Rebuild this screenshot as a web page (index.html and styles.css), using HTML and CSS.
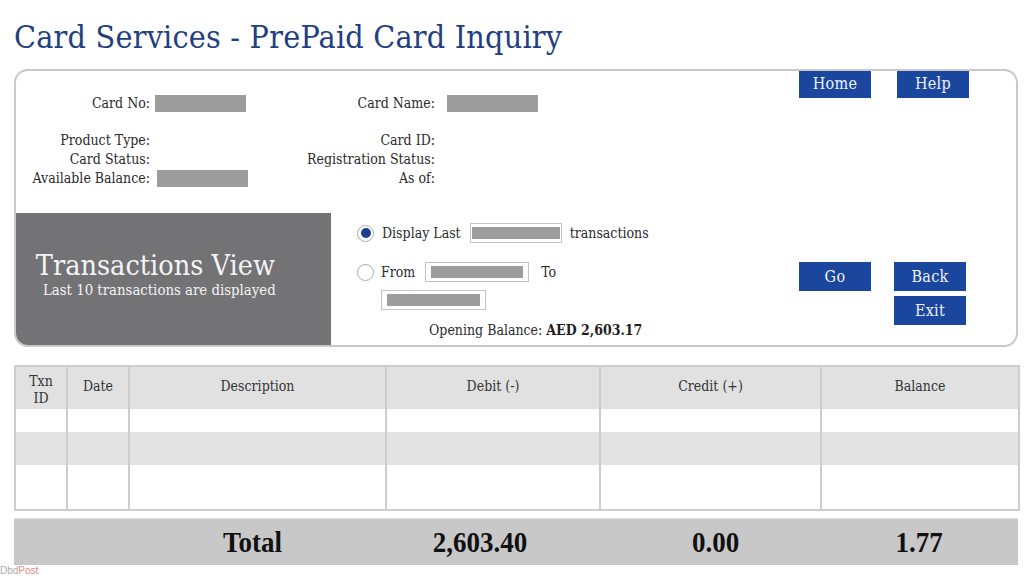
FILE: index.html
```html
<!DOCTYPE html>
<html lang="en">
<head>
<meta charset="utf-8">
<title>Card Services - PrePaid Card Inquiry</title>
<link rel="stylesheet" href="styles.css">
</head>
<body>
<h1 class="title">Card Services - PrePaid Card Inquiry</h1>

<section class="panel">
  <div class="info">
    <div class="fields">
      <span class="lbl">Card No:</span><span class="val"><span class="mask"></span></span>
      <span class="lbl">Card Name:</span><span class="val wide"><span class="mask"></span></span>

      <span class="lbl">Product Type:</span><span class="val"></span>
      <span class="lbl">Card ID:</span><span class="val"></span>

      <span class="lbl">Card Status:</span><span class="val"></span>
      <span class="lbl">Registration Status:</span><span class="val"></span>

      <span class="lbl">Available Balance:</span><span class="val"><span class="mask alt"></span></span>
      <span class="lbl">As of:</span><span class="val"></span>
    </div>
    <nav class="nav">
      <button class="btn">Home</button>
      <button class="btn">Help</button>
    </nav>
  </div>

  <div class="lower">
    <div class="tv">
      <div class="tv-text">
        <div class="tv-title">Transactions View</div>
        <div class="tv-sub">Last 10 transactions are displayed</div>
      </div>
    </div>

    <div class="filter">
      <div class="frow">
        <span class="radio on"></span>
        <span>Display Last</span>
        <span class="field f-last"><span class="fill"></span></span>
        <span>transactions</span>
      </div>
      <div class="frow r2">
        <span class="radio"></span>
        <span>From</span>
        <span class="field f-from"><span class="fill"></span></span>
        <span class="to">To</span>
      </div>
      <div class="frow r3">
        <span class="field f-to"><span class="fill"></span></span>
      </div>
      <div class="opening">Opening Balance: <b>AED 2,603.17</b></div>
    </div>

    <div class="actions">
      <button class="btn">Go</button>
      <button class="btn">Back</button>
      <button class="btn">Exit</button>
    </div>
  </div>
</section>

<table class="txns">
  <colgroup>
    <col class="c1"><col class="c2"><col class="c3"><col class="c4"><col class="c5"><col class="c6">
  </colgroup>
  <thead>
    <tr><th>Txn<br>ID</th><th>Date</th><th>Description</th><th>Debit (-)</th><th>Credit (+)</th><th>Balance</th></tr>
  </thead>
  <tbody>
    <tr class="ra"><td></td><td></td><td></td><td></td><td></td><td></td></tr>
    <tr class="rb"><td></td><td></td><td></td><td></td><td></td><td></td></tr>
    <tr class="rc"><td></td><td></td><td></td><td></td><td></td><td></td></tr>
  </tbody>
</table>

<div class="totals">
  <span></span><span></span>
  <span class="tot">Total</span>
  <span class="tot">2,603.40</span>
  <span class="tot">0.00</span>
  <span class="tot">1.77</span>
</div>

<div class="mark"><span class="m1">Dbd</span><span class="m2">Post</span></div>
</body>
</html>
```

FILE: styles.css
```css
* { box-sizing: border-box; }

html, body {
  margin: 0;
  background: #ffffff;
}

body {
  padding: 16px 6px 0 14px;
  font-family: "DejaVu Serif Condensed", "DejaVu Serif", serif;
  font-stretch: condensed;
  font-size: 14px;
  color: #2b2b2b;
  overflow: hidden;
  height: 576px;
}

.title {
  margin: 0 0 13px 0;
  font-size: 32px;
  line-height: 42px;
  font-weight: normal;
  color: #233f80;
  letter-spacing: 0.2px;
}

/* ---------- card panel ---------- */
.panel {
  height: 278px;
  margin-top: -2px;
  border: 2px solid #c9c9c9;
  border-radius: 14px;
  overflow: hidden;
  display: flex;
  flex-direction: column;
}

.info {
  height: 142px;
  display: flex;
  align-items: flex-start;
  padding-right: 47px;
}

.fields {
  display: grid;
  grid-template-columns: 134px 151px 134px 120px;
  grid-template-rows: 37px 19px 19px 19px;
  margin-top: 23px;
  align-items: start;
  line-height: 19px;
}

.lbl {
  text-align: right;
  white-space: nowrap;
}

.val {
  padding-left: 5px;
  display: flex;
  align-items: center;
  height: 19px;
}

.val.wide { padding-left: 12px; }

.mask {
  display: block;
  width: 91px;
  height: 17px;
  background: #9c9c9c;
}

.mask.alt { margin-left: 2px; }

.nav {
  margin-left: auto;
  margin-top: -2px;
  display: flex;
  gap: 26px;
}

.btn {
  width: 72px;
  height: 29px;
  border: 0;
  padding: 0;
  background: #1b469d;
  color: #eef2fa;
  font-family: inherit;
  font-stretch: condensed;
  font-size: 16px;
  line-height: 29px;
  letter-spacing: 0.3px;
}

/* ---------- lower band ---------- */
.lower {
  flex: 1;
  display: flex;
}

.tv {
  width: 315px;
  background: #737275;
  display: flex;
  align-items: center;
  padding-left: 19px;
  padding-bottom: 10px;
}

.tv-text {
  text-align: center;
  color: #f4f4f4;
}

.tv-title {
  font-size: 28.5px;
  line-height: 31px;
}

.tv-sub {
  font-size: 14.8px;
  line-height: 17px;
  padding-left: 8px;
}

.filter {
  flex: 1;
  padding: 10px 0 0 26px;
  display: flex;
  flex-direction: column;
}

.frow {
  display: flex;
  align-items: center;
  height: 20px;
  gap: 8px;
}

.frow.r2 { margin-top: 19px; gap: 7px; }
.frow.r3 { margin-top: 8px; padding-left: 24px; }

.radio {
  width: 17px;
  height: 17px;
  border-radius: 50%;
  border: 1px solid #a9a9a9;
  background: #fff;
  display: flex;
  align-items: center;
  justify-content: center;
  flex: none;
}

.radio.on::after {
  content: "";
  width: 10px;
  height: 10px;
  border-radius: 50%;
  background: #1d3f8e;
}

.field {
  display: flex;
  padding: 3px 5px;
  border: 1px solid #c4c4c4;
  background: #fff;
  height: 20px;
}

.fill {
  display: block;
  width: 100%;
  background: #9c9c9c;
}

.f-last { width: 92px; margin-left: 1px; padding: 3px 1px; }
.f-from { width: 104px; margin-left: 3px; }
.to { margin-left: 5px; }
.f-to { width: 105px; }

.opening {
  margin-top: 10px;
  padding-left: 72px;
  line-height: 20px;
}

.opening b { color: #1e1e1e; }

.actions {
  display: grid;
  grid-template-columns: 72px 72px;
  grid-template-rows: 29px 29px;
  column-gap: 23px;
  row-gap: 5px;
  padding: 49px 50px 0 0;
}

.actions .btn:nth-child(3) { grid-column: 2; }

/* ---------- transactions table ---------- */
.txns {
  margin-top: 18px;
  width: 1004px;
  border-collapse: collapse;
  table-layout: fixed;
  border: 2px solid #cdcdcd;
}

.c1 { width: 52px; }
.c2 { width: 62px; }
.c3 { width: 257px; }
.c4 { width: 214px; }
.c5 { width: 221px; }
.c6 { width: 198px; }

.txns th, .txns td {
  border-left: 2px solid #cdcdcd;
  border-right: 2px solid #cdcdcd;
  padding: 0;
}

.txns th {
  height: 43px;
  background: #e1e1e1;
  font-weight: normal;
  vertical-align: top;
  padding-top: 11px;
  line-height: 17px;
  color: #333;
}

.txns th:first-child { padding-top: 6px; }

.ra td { height: 23px; background: #fff; }
.rb td { height: 33px; background: #e3e3e3; }
.rc td { height: 45px; background: #fff; }

/* ---------- totals bar ---------- */
.totals {
  margin-top: 7px;
  width: 1004px;
  height: 47px;
  background: #c8c8c8;
  border-top: 1px solid #dedede;
  display: grid;
  grid-template-columns: 52px 62px 257px 214px 221px 198px;
  align-items: center;
}

.tot {
  text-align: center;
  font-family: "Liberation Serif", serif;
  font-weight: bold;
  font-size: 27px;
  color: #111;
  transform: scaleY(1.12);
}

.tot:nth-child(3) { padding-right: 8px; }
.tot:nth-child(4) { padding-right: 24px; }
.tot:nth-child(5) { padding-left: 12px; }

.mark {
  margin: 0 0 0 -14px;
  font-family: "Liberation Sans", sans-serif;
  font-size: 10px;
  line-height: 11px;
  opacity: 0.7;
}

.m1 { color: #8a8a8a; }
.m2 { color: #d9534f; }
```
